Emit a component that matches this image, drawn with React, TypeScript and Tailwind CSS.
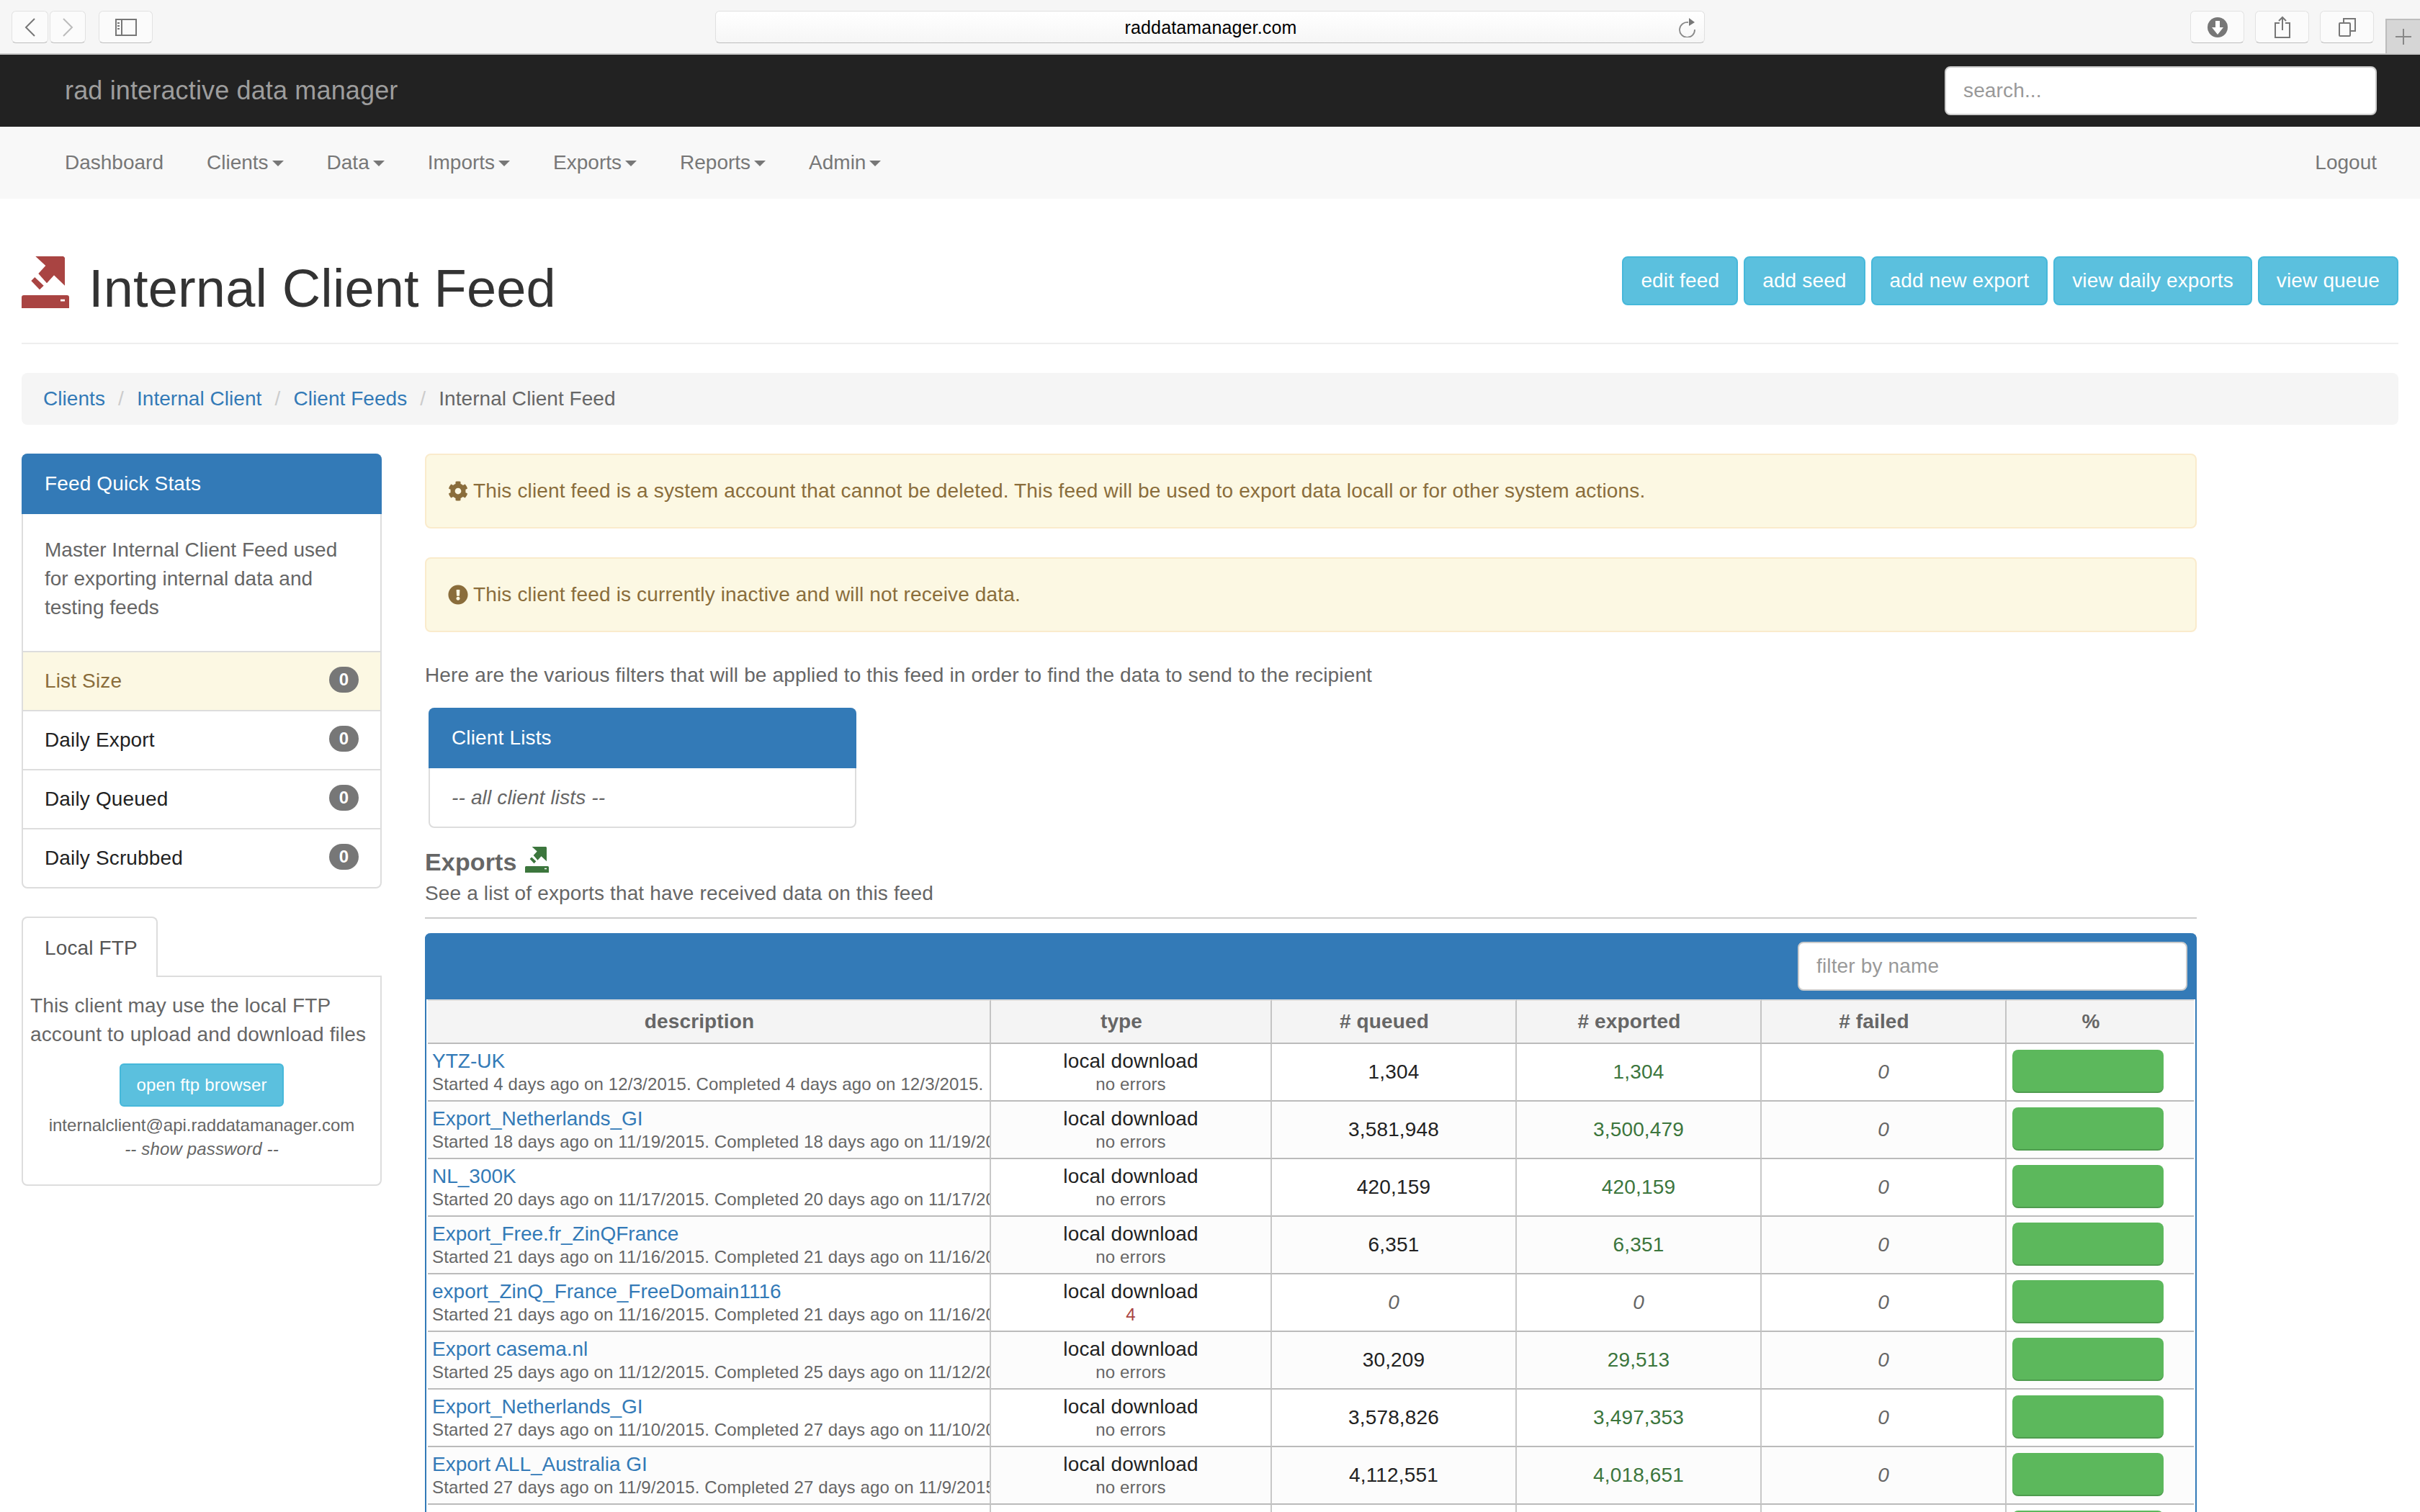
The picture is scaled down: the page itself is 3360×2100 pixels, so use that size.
import { FaCog, FaExclamationCircle } from "react-icons/fa";

const NAV_ITEMS = ["Clients", "Data", "Imports", "Exports", "Reports", "Admin"];
const ACTIONS = ["edit feed", "add seed", "add new export", "view daily exports", "view queue"];
const STATS = [
  { label: "List Size", warn: true },
  { label: "Daily Export" },
  { label: "Daily Queued" },
  { label: "Daily Scrubbed" },
];

const EXPORTS = [
  { name: "YTZ-UK", days: 4, date: "12/3/2015", queued: "1,304", exported: "1,304" },
  { name: "Export_Netherlands_GI", days: 18, date: "11/19/2015", queued: "3,581,948", exported: "3,500,479" },
  { name: "NL_300K", days: 20, date: "11/17/2015", queued: "420,159", exported: "420,159" },
  { name: "Export_Free.fr_ZinQFrance", days: 21, date: "11/16/2015", queued: "6,351", exported: "6,351" },
  { name: "export_ZinQ_France_FreeDomain1116", days: 21, date: "11/16/2015", queued: "0", exported: "0", errors: "4" },
  { name: "Export casema.nl", days: 25, date: "11/12/2015", queued: "30,209", exported: "29,513" },
  { name: "Export_Netherlands_GI", days: 27, date: "11/10/2015", queued: "3,578,826", exported: "3,497,353" },
  { name: "Export ALL_Australia GI", days: 27, date: "11/9/2015", queued: "4,112,551", exported: "4,018,651" },
  { name: "Export ALL_Australia GI", days: 27, date: "11/9/2015", queued: "4,112,551", exported: "4,018,651" },
];

const COLUMNS = [
  { label: "description", width: "w-[782px]" },
  { label: "type", width: "w-[390px]" },
  { label: "# queued", width: "w-[340px]" },
  { label: "# exported", width: "w-[340px]" },
  { label: "# failed", width: "w-[340px]" },
  { label: "%", width: "w-[260px]" },
];

function ExportIcon({ className }: { className: string }) {
  return (
    <svg viewBox="0 0 66 72" className={className} fill="currentColor">
      <path d="M19.3 0H58l2 2v38.7L45 26.3 35 37.3 23.3 24l10-11z" />
      <path d="M13.3 34l5-5 12.4 11.7-5.7 5.6z" />
      <path fillRule="evenodd" d="M3 54h60a3 3 0 0 1 3 3v15H0V57a3 3 0 0 1 3-3zM54 59.7v2.8h6v-2.8z" />
    </svg>
  );
}

function ChromeButton({ className, children }: { className: string; children: React.ReactNode }) {
  return (
    <div className={`h-[45px] flex items-center justify-center bg-[#fbfbfb] border border-[#e2e2e2] border-b-[#bdbdbd] rounded-[6px] ${className}`}>
      {children}
    </div>
  );
}

function BrowserBar() {
  return (
    <div className="h-[76px] bg-[#f6f6f6] border-b-2 border-[#c8c8c8] flex pl-[16px]">
      <div className="flex items-start pt-[15px]">
        <ChromeButton className="w-[51px]">
          <svg width="16" height="26" viewBox="0 0 16 26" fill="none" stroke="#777" strokeWidth="2"><path d="M14 1L2 13l12 12" /></svg>
        </ChromeButton>
        <ChromeButton className="w-[50px] ml-[2px]">
          <svg width="16" height="26" viewBox="0 0 16 26" fill="none" stroke="#bbb" strokeWidth="2"><path d="M2 1l12 12L2 25" /></svg>
        </ChromeButton>
        <ChromeButton className="w-[75px] ml-[18px]">
          <svg width="30" height="24" viewBox="0 0 30 24" fill="none" stroke="#777" strokeWidth="2">
            <rect x="1" y="1" width="28" height="22" />
            <path d="M9 1v22" />
            <path d="M3 6h3M3 10h3M3 14h3" />
          </svg>
        </ChromeButton>
        <div className="w-[781px] shrink-0" />
        <div className="w-[1374px] h-[45px] bg-gradient-to-b from-white to-[#f6f6f6] border border-[#e0e0e0] border-b-[#bdbdbd] rounded-[6px] flex items-center relative">
          <span className="w-full text-center text-[25px] text-black pl-[2px]">raddatamanager.com</span>
          <svg className="absolute right-[11px] top-[9px]" width="24" height="27" viewBox="0 0 24 27" fill="none">
            <path d="M13 6A10.5 10.5 0 1 0 22 16" stroke="#888" strokeWidth="1.8" />
            <path d="M14 0l8 6-8 5z" fill="#777" />
          </svg>
        </div>
        <ChromeButton className="w-[75px] ml-[674px]">
          <svg width="30" height="30" viewBox="0 0 30 30"><circle cx="15" cy="15" r="14" fill="#777" /><path d="M12 6h6v9h5l-8 10-8-10h5z" fill="#fff" /></svg>
        </ChromeButton>
        <ChromeButton className="w-[75px] ml-[15px]">
          <svg width="24" height="31" viewBox="0 0 24 31" fill="none" stroke="#777" strokeWidth="2"><path d="M8 10H2v20h20V10h-6M12 20V2M7 7l5-5 5 5" /></svg>
        </ChromeButton>
        <ChromeButton className="w-[75px] ml-[15px]">
          <svg width="24" height="26" viewBox="0 0 24 26" fill="none" stroke="#777" strokeWidth="2"><rect x="1" y="7" width="15" height="18" rx="1" /><path d="M7 7V1h16v17h-7" /></svg>
        </ChromeButton>
      </div>
      <div className="ml-auto w-[48px] mt-[26px] h-[48px] bg-[#d6d6d6] border-l-2 border-t-2 border-[#bdbdbd] flex items-center justify-center">
        <svg width="24" height="24" viewBox="0 0 24 24" stroke="#888" strokeWidth="2"><path d="M12 1v22M1 12h22" /></svg>
      </div>
    </div>
  );
}

function Panel({ title, className, children }: { title: string; className: string; children: React.ReactNode }) {
  return (
    <div className={`border-2 border-[#ddd] rounded-[8px] bg-white ${className}`}>
      <div className="-m-[2px] mb-0 h-[84px] bg-[#337ab7] rounded-t-[8px] text-white flex items-center px-[32px]">{title}</div>
      {children}
    </div>
  );
}

function Sidebar() {
  return (
    <div className="w-[500px] shrink-0">
      <Panel title="Feed Quick Stats" className="">
        <p className="pt-[30px] pb-[40px] px-[30px] text-[#666] tracking-normal">Master Internal Client Feed used for exporting internal data and testing feeds</p>
        {STATS.map(s => (
          <div
            key={s.label}
            className={`h-[82px] border-t-2 border-[#ddd] flex items-center justify-between px-[30px] ${s.warn ? "bg-[#fcf8e3] text-[#8a6d3b]" : "text-[#222]"}`}
          >
            <span>{s.label}</span>
            <span className="w-[41px] h-[36px] -mt-[4px] rounded-full bg-[#777] text-white text-[24px] font-bold leading-[36px] text-center">0</span>
          </div>
        ))}
      </Panel>

      <div className="mt-[39px]">
        <div className="relative z-10 -mb-[2px] w-[189px] h-[84px] bg-white border-2 border-b-0 border-[#ddd] rounded-t-[8px] pl-[30px] pt-[22px] text-[#555]">Local FTP</div>
        <div className="h-[292px] border-2 border-[#ddd] rounded-b-[8px] px-[10px] pt-[20px] text-[#666]">
          <p>This client may use the local FTP account to upload and download files</p>
          <div className="text-center text-[24px]">
            <button className="mt-[20px] w-[228px] h-[60px] bg-[#5bc0de] border-2 border-[#46b8da] rounded-[6px] text-white">open ftp browser</button>
            <div className="mt-[9px] leading-[34px] tracking-normal">internalclient@api.raddatamanager.com</div>
            <div className="italic leading-[32px]">-- show password --</div>
          </div>
        </div>
      </div>
    </div>
  );
}

function ExportsTable() {
  return (
    <div className="mt-[20px] border-2 border-t-0 border-[#337ab7] rounded-t-[8px]">
      <div className="-mx-[2px] h-[92px] bg-[#337ab7] rounded-t-[8px] flex justify-end items-start pt-[12px] pr-[13px]">
        <input placeholder="filter by name" className="w-[541px] h-[68px] bg-white border-2 border-[#ccc] rounded-[8px] px-[24px] text-[28px] placeholder:text-[#999]" />
      </div>
      <table className="ml-[2px] w-[2452px] table-fixed border-separate border-spacing-0">
        <thead>
          <tr>
            {COLUMNS.map((c, i) => (
              <th
                key={c.label}
                className={`${c.width} h-[62px] border-t-2 border-t-[#ddd] border-b-2 border-b-[#bbb] bg-[#f4f4f4] pl-[8px] pr-[34px] font-bold text-center text-[#666] ${i < 5 ? "border-r-2 border-r-[#c4c4c4]" : ""}`}
              >
                {c.label}
              </th>
            ))}
          </tr>
        </thead>
        <tbody>
          {EXPORTS.map((e, i) => {
            const cell = `h-[80px] border-b-2 border-b-[#bbb] ${i % 2 ? "bg-[#fcfcfc]" : "bg-white"}`;
            const sep = "border-r-2 border-r-[#c8c8c8] text-center";
            return (
              <tr key={i}>
                <td className={`${cell} border-r-2 border-r-[#c8c8c8] max-w-0 overflow-hidden whitespace-nowrap pl-[6px] align-top pt-[8px]`}>
                  <a className="block leading-[32px] tracking-normal text-[#337ab7]">{e.name}</a>
                  <div className="leading-[32px] text-[24px] text-[#666]">
                    Started {e.days} days ago on {e.date}. Completed {e.days} days ago on {e.date}.
                  </div>
                </td>
                <td className={`${cell} ${sep} align-top pt-[8px]`}>
                  <div className="leading-[32px] text-[#222]">local download</div>
                  <div className={`leading-[32px] text-[24px] ${e.errors ? "text-[#a94442]" : "text-[#666]"}`}>{e.errors ?? "no errors"}</div>
                </td>
                <td className={`${cell} ${sep} ${e.errors ? "italic text-[#666]" : "text-[#222]"}`}>{e.queued}</td>
                <td className={`${cell} ${sep} ${e.errors ? "italic text-[#666]" : "text-[#3c763d]"}`}>{e.exported}</td>
                <td className={`${cell} ${sep} italic text-[#666]`}>0</td>
                <td className={`${cell} align-top pl-[8px] pt-[8px]`}>
                  <div className="w-[210px] h-[60px] bg-[#5cb85c] rounded-[8px] shadow-[inset_0_-2px_0_rgba(0,0,0,0.15)]" />
                </td>
              </tr>
            );
          })}
        </tbody>
      </table>
    </div>
  );
}

export default function App() {
  return (
    <div className="h-[2100px] overflow-hidden bg-white text-[28px] leading-[40px] tracking-[0.15px] font-['Liberation_Sans',Arial,sans-serif]">
      <BrowserBar />

      <div className="h-[100px] bg-[#222] flex items-center justify-between px-[60px]">
        <span className="ml-[30px] text-[36px] text-[#9d9d9d]">rad interactive data manager</span>
        <input placeholder="search..." className="w-[600px] h-[68px] bg-white border-2 border-[#ccc] rounded-[8px] px-[24px] text-[28px] placeholder:text-[#999]" />
      </div>

      <div className="h-[100px] bg-[#f8f8f8] flex items-center justify-between pl-[60px] pr-[60px] text-[#777] tracking-normal">
        <div className="flex">
          <span className="px-[30px]">Dashboard</span>
          {NAV_ITEMS.map(n => (
            <span key={n} className="px-[30px] flex items-center">
              {n}
              <span className="ml-[5px] mt-[2px] border-x-[8px] border-x-transparent border-t-[8px] border-t-[#777]" />
            </span>
          ))}
        </div>
        <span>Logout</span>
      </div>

      <div className="px-[30px] pt-[80px]">
        <div className="h-[122px] border-b-2 border-[#eee] flex justify-between items-start">
          <div className="flex items-start">
            <ExportIcon className="w-[66px] h-[72px] text-[#a94442]" />
            <h1 className="ml-[27px] mt-[5px] text-[74px] leading-[80px] text-[#333]">Internal Client Feed</h1>
          </div>
          <div className="flex gap-[8px]">
            {ACTIONS.map(a => (
              <button key={a} className="h-[68px] px-[24px] bg-[#5bc0de] border-2 border-[#46b8da] rounded-[8px] text-white">{a}</button>
            ))}
          </div>
        </div>

        <div className="mt-[40px] h-[72px] bg-[#f5f5f5] rounded-[8px] flex items-center px-[30px] text-[#666] tracking-[0.05px]">
          <a className="text-[#337ab7]">Clients</a>
          <span className="w-[44px] pl-[18px] text-[#ccc]">/</span>
          <a className="text-[#337ab7]">Internal Client</a>
          <span className="w-[44px] pl-[18px] text-[#ccc]">/</span>
          <a className="text-[#337ab7]">Client Feeds</a>
          <span className="w-[44px] pl-[18px] text-[#ccc]">/</span>
          <span>Internal Client Feed</span>
        </div>

        <div className="mt-[40px] flex gap-[60px]">
          <Sidebar />

          <div className="w-[2460px] shrink-0 text-[#666]">
            <div className="h-[104px] bg-[#fcf8e3] border-2 border-[#faebcc] rounded-[8px] px-[30px] flex items-center text-[#8a6d3b]">
              <FaCog className="w-[28px] h-[28px] mr-[7px]" />
              This client feed is a system account that cannot be deleted. This feed will be used to export data locall or for other system actions.
            </div>
            <div className="mt-[40px] h-[104px] bg-[#fcf8e3] border-2 border-[#faebcc] rounded-[8px] px-[30px] flex items-center text-[#8a6d3b]">
              <FaExclamationCircle className="w-[28px] h-[28px] mr-[7px]" />
              This client feed is currently inactive and will not receive data.
            </div>

            <p className="mt-[40px]">Here are the various filters that will be applied to this feed in order to find the data to send to the recipient</p>

            <Panel title="Client Lists" className="mt-[25px] ml-[5px] w-[594px]">
              <div className="h-[81px] flex items-center px-[30px] italic">-- all client lists --</div>
            </Panel>

            <div className="mt-[27px] flex items-start">
              <span className="text-[34px] font-bold leading-[40px] text-[#666]">Exports</span>
              <ExportIcon className="ml-[11px] -mt-[1px] w-[33px] h-[36px] text-[#3c763d]" />
            </div>
            <p className="mt-[4px]">See a list of exports that have received data on this feed</p>
            <div className="mt-[13px] h-[2px] bg-[#ccc]" />

            <ExportsTable />
          </div>
        </div>
      </div>
    </div>
  );
}
